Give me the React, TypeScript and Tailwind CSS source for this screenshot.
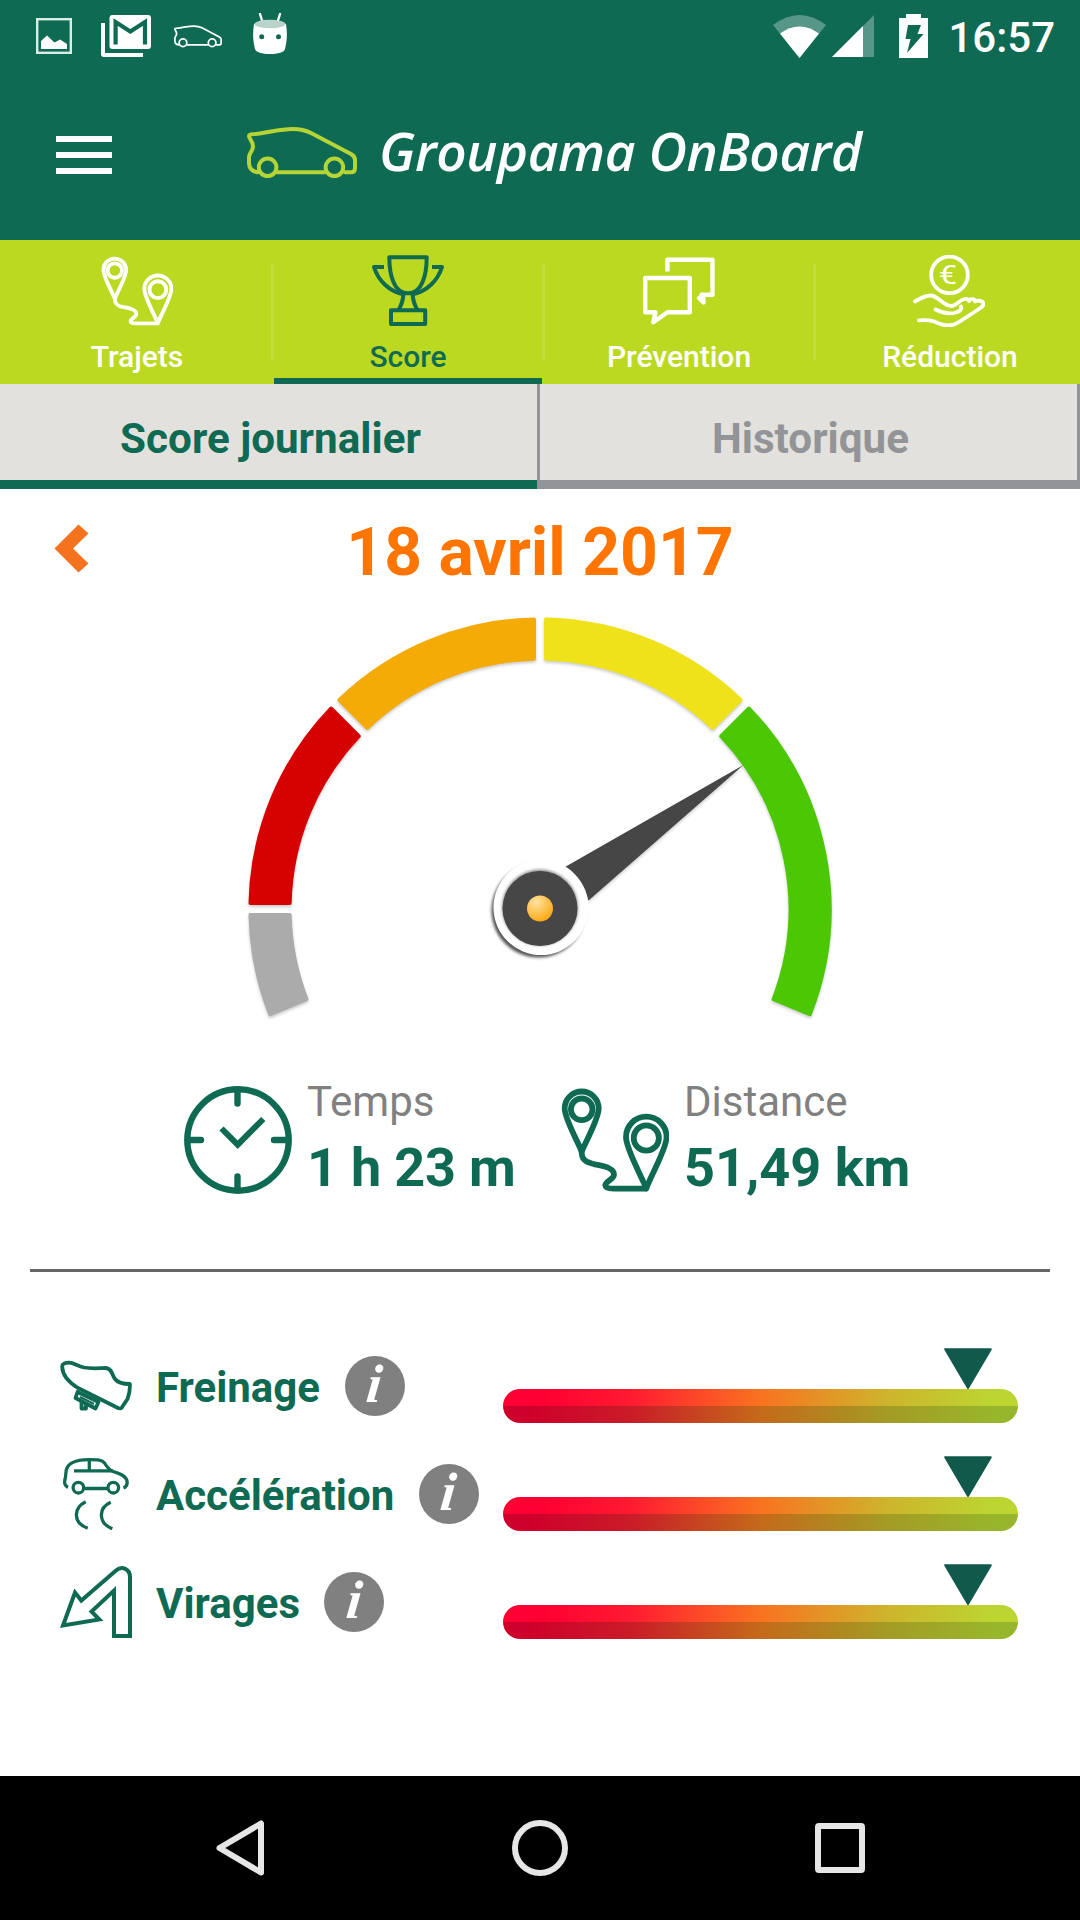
import React from 'react';

const GREEN = '#0f6a53';

// ring geometry, in the gauge's own coordinates
const CX = 300;
const CY = 300;
const R_OUT = 289.6;
const R_IN = 250.4;
const GAP = 6;

const segments = [
  { from: 157.5, to: 180, color: '#ababab' },
  { from: 180, to: 225, color: '#d60202' },
  { from: 225, to: 270, color: '#f5ab05' },
  { from: 270, to: 315, color: '#efe21a' },
  { from: 315, to: 382.5, color: '#4cc704' },
];

const tabs = [
  { name: 'Trajets', icon: <RouteIcon className="h-[72px] w-[72px]" /> },
  { name: 'Score', icon: <TrophyIcon />, active: true },
  { name: 'Prévention', icon: <BubblesIcon /> },
  { name: 'Réduction', icon: <HandIcon /> },
];

const scores = [
  { name: 'Freinage', icon: <BrakeIcon />, value: 90.3 },
  { name: 'Accélération', icon: <SkidIcon />, value: 90.3 },
  { name: 'Virages', icon: <TurnIcon />, value: 90.3 },
];

function point(r: number, deg: number, shift: number) {
  const a = (deg * Math.PI) / 180 + Math.asin(shift / r);
  return `${(CX + r * Math.cos(a)).toFixed(2)} ${(CY + r * Math.sin(a)).toFixed(2)}`;
}

function segmentPath(from: number, to: number) {
  return `M${point(R_OUT, from, GAP)}A${R_OUT} ${R_OUT} 0 0 1 ${point(R_OUT, to, -GAP)}L${point(R_IN, to, -GAP)}A${R_IN} ${R_IN} 0 0 0 ${point(R_IN, from, GAP)}Z`;
}

function CarIcon({ className }: { className: string }) {
  return (
    <svg className={className} viewBox="0 0 110 52" fill="none" stroke="currentColor" strokeWidth="4" strokeLinecap="round" strokeLinejoin="round">
      <path d="M11 45.3C5 44.5 2 41 2 36V30C2 26 6 24 6 19.5C6 14 2 12 2 9C2 7.5 4 7 8 7C20 6 32 2 46 2C54 2 58 3 64 6L104 27C107.5 29 108 30.5 108 33V41C108 44 106.5 45.3 104 45.3H98M30 45.3H78" />
      <circle cx="20.6" cy="40.3" r="8.8" />
      <circle cx="87.4" cy="40.3" r="8.8" />
    </svg>
  );
}

function RouteIcon({ className }: { className: string }) {
  return (
    <svg className={className} viewBox="0 0 108 108" fill="none" stroke="currentColor" strokeWidth="5.8" strokeLinejoin="round">
      <path d="M20.7 65.5C18 58 3.7 33 3.7 22.5A17 17 0 0 1 37.7 22.5C37.7 33 23.5 58 20.7 65.5Z" />
      <circle cx="20.7" cy="23.3" r="10.8" />
      <path d="M85.3 102.5C80 89 65 63 65 51A20.3 20.3 0 0 1 105.6 51C105.6 63 90 89 85.3 102.5Z" />
      <circle cx="85.3" cy="52" r="12.6" />
      <path d="M20.7 64C20 73 24 76.5 34 78.3C44 79.8 53 83 53 88.5C53 93.5 44.3 95 44.3 99.3C44.3 102 48 102.6 53 102.6H86" />
    </svg>
  );
}

function TrophyIcon() {
  return (
    <svg className="h-[72px] w-[72px]" viewBox="0 0 72 72" fill="none" stroke="currentColor" strokeWidth="4" strokeLinejoin="round">
      <path d="M17.3 2.2H54.7C54.7 20 50 38.3 36 38.3S17.3 20 17.3 2.2Z" />
      <path d="M12 12H2C6 25 17 37 33 39.5M60 12H70C66 25 55 37 39 39.5" />
      <path d="M31.5 39C31 45 29 51 26.5 55M40.5 39C41 45 43 51 45.5 55" />
      <rect x="19" y="55.3" width="34.2" height="13.7" />
    </svg>
  );
}

function BubblesIcon() {
  return (
    <svg className="h-[72px] w-[72px]" viewBox="0 0 72 72" fill="none" stroke="currentColor" strokeWidth="4.4" strokeLinejoin="round">
      <path d="M2.2 23H46.8V57.3H24.5L10.3 67.3L12.5 57.3H2.2Z" />
      <path d="M24.4 16.5V4.7H69.5V39.7H58.5V42L56 43L60.5 47.5L60 40" />
    </svg>
  );
}

function HandIcon() {
  return (
    <svg className="-ml-[2px] h-[72px] w-[72px]" viewBox="0 0 72 72" fill="none" stroke="currentColor" strokeWidth="3.8" strokeLinecap="round" strokeLinejoin="round">
      <circle cx="36.5" cy="19.9" r="18.3" />
      <text x="28" y="29" textAnchor="middle" transform="scale(1.25 1)" fontSize="26" fontWeight="400" fontFamily="Roboto, sans-serif" fill="currentColor" stroke="none">€</text>
      <path d="M2 46.5C7 43.5 12 40.5 17.5 40.5C25 40.5 30 51 38.5 51C43 51 46 45 52 44C54 43.5 56 44.5 56 46C57 43.5 62 43.5 62 46.5C65 44.5 70.5 46 70.5 49C70.5 51 69 52 67.5 53L46 67C40 71 33 71.5 26 68.5C18 65 15 65 6 65.3" />
      <path d="M22.5 54.5C29 58 35 59 41 58C46 57 49 55 48 51.5" />
    </svg>
  );
}

function ClockIcon() {
  return (
    <svg className="h-[108px] w-[108px]" viewBox="0 0 108 108" fill="none" stroke={GREEN} strokeWidth="6.4">
      <circle cx="54" cy="54" r="50.7" />
      <path strokeLinecap="round" d="M53.5 4V17.5M53.5 90.5V104M4 54H17M90 54H104" />
      <path strokeWidth="6" d="M37.5 42.5L53.7 58.7L79.3 33" />
    </svg>
  );
}

function BrakeIcon() {
  return (
    <svg className="h-[72px] w-[72px]" viewBox="0 0 72 72" fill="none" stroke={GREEN} strokeWidth="3.8" strokeLinejoin="round">
      <path d="M2.2 16.5C2 14 5 12.6 9 12.6C14 12.6 17 16 24 17.5C32 19 40 18 46 18C52 18.5 52 25 55 29C58 33 64 34 69.8 34C70.3 40 69 45 67.5 49L61.5 58C60 59.5 57 57.5 54 56L18 38C10 33 2.2 25 2.2 16.5Z" />
      <path d="M17.5 42L38.5 52L35.5 58.5L15.5 48Z" />
      <path strokeWidth="2" d="M20 47L34 54" />
      <path d="M21.5 51V58.5H26V54" />
    </svg>
  );
}

function SkidIcon() {
  return (
    <svg className="h-[72px] w-[72px]" viewBox="0 0 72 72" fill="none" stroke={GREEN} strokeWidth="3.3">
      <path d="M8 29.5C5 28 4.3 25 4.8 22C6 19 5.5 16 6.3 12C8 5 17 1.7 29 1.7C38 1.7 42 1.7 44.5 5C47 9 49 12 53 13.5C60 15.5 67.2 18 67.2 24.5C67.2 28 66 29 63.5 30" />
      <path d="M14 12.8H53M29.3 1.5V12.8M25 30.5H47" />
      <circle cx="18.4" cy="29.7" r="5.3" />
      <circle cx="53.3" cy="29.7" r="5.3" />
      <path d="M25.7 43.7C13 50 13 65 27.7 70.2M50.7 44.3C38 50 38 65 52.3 70.8" />
    </svg>
  );
}

function TurnIcon() {
  return (
    <svg className="h-[72px] w-[72px]" viewBox="0 0 72 72" fill="none" stroke={GREEN} strokeWidth="4">
      <path d="M3 59.5L15 26.5L21.3 34.5L56 4.5C62 -0.5 70 3 70 11V70H54V24.5L31.5 45.5L39.3 53.5Z" />
    </svg>
  );
}

function StatusBar() {
  return (
    <div className="flex h-[72px] items-center justify-between pl-9 pr-[25px] text-white">
      <div className="flex items-center">
        <svg className="h-9 w-9" viewBox="0 0 36 36">
          <rect x="1.2" y="1.2" width="33.6" height="33.6" fill="none" stroke="#d8eee6" strokeWidth="2.4" />
          <path d="M5 31V23L11 17.5L18.5 24.5L24 21.5L31 26V31Z" fill="#fff" />
        </svg>
        <svg className="ml-[29px] h-[42px] w-[50px]" viewBox="0 0 50 42">
          <path d="M0 8H4V38H42V42H3Q0 42 0 39Z" fill="#fff" />
          <rect x="8.5" y="0" width="41.5" height="34" rx="3" fill="#fff" />
          <path d="M14.6 29.5V7L29.3 16.5L44 7V29.5" fill="none" stroke={GREEN} strokeWidth="4.2" />
        </svg>
        <CarIcon className="ml-[23px] h-[23px] w-12" />
        <svg className="ml-[31px] h-[41px] w-[34px] -translate-y-[3px]" viewBox="0 0 34 41">
          <path d="M7 1L9.5 9M27 1L24.5 9" stroke="#fff" strokeWidth="2.4" strokeLinecap="round" />
          <path d="M1 11H33C34.5 20 34 28 32 36C31 39.5 25 41 17 41S3 39.5 2 36C0 28 -0.5 20 1 11Z" fill="#fff" />
          <ellipse cx="17" cy="11" rx="15.5" ry="4.3" fill="#b9d3ca" />
          <circle cx="8.7" cy="23.7" r="2.5" fill={GREEN} />
          <circle cx="25.5" cy="23.7" r="2.5" fill={GREEN} />
        </svg>
      </div>
      <div className="flex items-center">
        <svg className="h-[43px] w-[53px]" viewBox="0 0 53 43">
          <path d="M0 10Q26.5 -10 53 10L26.5 43Z" fill="#fff" opacity=".3" />
          <path d="M7 18.5Q26.5 4.5 46 18.5L26.5 43Z" fill="#fff" />
        </svg>
        <svg className="ml-[6px] h-[42px] w-[42px]" viewBox="0 0 42 42">
          <path d="M42 0V42H0Z" fill="#fff" opacity=".3" />
          <path d="M31 11V42H0Z" fill="#fff" />
        </svg>
        <svg className="ml-[25px] h-11 w-[29px]" viewBox="0 0 29 44">
          <path d="M7 0H22V4H29V44H0V4H7Z" fill="#fff" />
          <path d="M9 11H22L18.5 20H24.5L8 39L11.5 25H6.5Z" fill={GREEN} />
        </svg>
        <span className="ml-5 pt-[3px] text-[42px] font-medium leading-none">16:57</span>
      </div>
    </div>
  );
}

function Header() {
  return (
    <header className="flex h-[168px] items-center pb-[6px] pl-14 text-white">
      <div className="flex flex-col gap-2.5 pt-1">
        <div className="h-1.5 w-14 bg-white" />
        <div className="h-1.5 w-14 bg-white" />
        <div className="h-1.5 w-14 bg-white" />
      </div>
      <CarIcon className="ml-[135px] h-[52px] w-[110px] text-[#b4d535]" />
      <h1 className="ml-[22px] whitespace-nowrap pb-[5px] font-['Open_Sans',sans-serif] text-[53px] font-semibold italic leading-none tracking-[-0.4px]">
        Groupama OnBoard
      </h1>
    </header>
  );
}

function Gauge() {
  return (
    <svg className="mx-auto block h-[420px] w-[600px] overflow-visible" viewBox="0 0 600 420">
      <defs>
        <radialGradient id="ball" cx="35%" cy="25%" r="80%">
          <stop offset="0" stopColor="#ffe3a0" />
          <stop offset="1" stopColor="#f9a710" />
        </radialGradient>
        <filter id="soft" x="-10%" y="-10%" width="120%" height="120%" colorInterpolationFilters="sRGB">
          <feDropShadow dx="0" dy="2" stdDeviation="1.5" floodColor="#000" floodOpacity=".2" />
        </filter>
        <filter id="blur" x="-20%" y="-20%" width="140%" height="140%">
          <feGaussianBlur stdDeviation="1.5" />
        </filter>
      </defs>
      <g filter="url(#soft)">
        {segments.map((s) => (
          <path key={s.color} d={segmentPath(s.from, s.to)} fill={s.color} stroke={s.color} strokeWidth="4" strokeLinejoin="round" />
        ))}
      </g>
      <path d="M503.5 156L325 258Q342 270 348.5 291.5Z" fill="#464646" filter="url(#soft)" />
      <circle cx="298.5" cy="301.5" r="47" fill="#555" filter="url(#blur)" />
      <circle cx="301" cy="298.5" r="47.5" fill="#fff" />
      <circle cx="300" cy="298.5" r="38" fill="#888" filter="url(#blur)" />
      <circle cx="300" cy="299.5" r="37.5" fill="#464646" />
      <circle cx="300" cy="299.5" r="13" fill="url(#ball)" />
    </svg>
  );
}

function ScoreRow({ name, icon, value }: { name: string; icon: React.ReactNode; value: number }) {
  return (
    <div className="flex h-[108px] items-center">
      {icon}
      <span className="ml-6 pt-1 text-[42px] font-bold leading-none">{name}</span>
      <span className="ml-[24.5px] flex h-[60px] w-[60px] items-center justify-center rounded-full bg-[#808080] pb-1 font-['Liberation_Serif',serif] text-[54px] font-bold italic leading-none text-white">
        <span className="-skew-x-6">i</span>
      </span>
      <div className="relative ml-auto mt-[40px] h-[34px] w-[515px]">
        <div className="h-full overflow-hidden rounded-full">
          <div className="h-[17px] bg-[linear-gradient(to_right,#ff0033_8%,#ff1b30_25%,#f97320_50%,#cdb52c_75%,#bcd530_95%)]" />
          <div className="h-[17px] bg-[linear-gradient(to_right,#ce002b_5%,#c91c28_25%,#c46a1a_50%,#a39c25_75%,#98b62b_95%)]" />
        </div>
        <svg className="absolute -top-[41px] h-[41px] w-12 -translate-x-1/2" style={{ left: `${value}%` }} viewBox="0 0 48 41">
          <path d="M1.2 1.2H46.8L24 40Z" fill="#10594b" stroke="#10594b" strokeWidth="2" strokeLinejoin="round" />
        </svg>
      </div>
    </div>
  );
}

function NavBar() {
  return (
    <nav className="flex h-36 items-center justify-between bg-black pl-[216px] pr-[215px]">
      <svg className="h-14 w-12" viewBox="0 0 48 56" fill="none" stroke="#e6e6e6" strokeWidth="6" strokeLinejoin="round">
        <path d="M45 3.5V52.5L3.5 28Z" />
      </svg>
      <div className="h-14 w-14 rounded-full border-[6px] border-[#e6e6e6]" />
      <div className="h-[50px] w-[50px] rounded border-[6px] border-[#e6e6e6]" />
    </nav>
  );
}

const App = () => {
  return (
    <div className="flex h-[1920px] w-[1080px] flex-col overflow-hidden bg-white font-[Roboto,sans-serif] text-[#0f6a53]">
      <div className="bg-[#0f6a53]">
        <StatusBar />
        <Header />
      </div>

      {/* Main tabs */}
      <div className="flex h-36 overflow-hidden bg-[#bcd922]">
        {tabs.map((tab, i) => (
          <div key={tab.name} className="flex h-full w-[271px] shrink-0">
            <div className={`mt-6 h-24 w-[3px] ${i > 0 ? 'bg-[#c3dd3c]' : ''}`} />
            <div className={`flex flex-1 flex-col items-center border-b-[6px] pt-[15px] ${tab.active ? 'border-[#0f6a53]' : 'border-transparent text-white'}`}>
              {tab.icon}
              <span className="mt-[14px] text-[30px] font-medium leading-8">{tab.name}</span>
            </div>
          </div>
        ))}
      </div>

      {/* Sub tabs */}
      <div className="flex h-[105px] bg-[#e2e1dd] text-[42.2px] font-bold">
        <div className="flex w-[537px] items-center justify-center border-b-[9px] border-[#0f6a53] pl-1 pt-3.5">Score journalier</div>
        <div className="w-[3px] bg-[#929497]" />
        <div className="flex w-[540px] items-center justify-center border-b-[9px] border-r-[3px] border-[#929497] pl-1 pt-3.5 text-[#929497]">Historique</div>
      </div>

      {/* Day */}
      <div className="relative flex h-[120px] items-center justify-center">
        <svg className="absolute left-[53.5px] top-[35px] h-[49px] w-9" viewBox="0 0 36 49">
          <path d="M24.5 0.5L0.5 24.5L24.5 48.5L34.5 39.5L19 24.5L34.5 9.5Z" fill="#f5731f" />
        </svg>
        <span className="pt-[7px] text-[66px] font-bold leading-none text-[#ff7500]">18 avril 2017</span>
      </div>

      <Gauge />

      {/* Trip totals */}
      <div className="mt-[57px] flex h-[108px] pl-[184px]">
        <ClockIcon />
        <div className="ml-[15px] w-[254px]">
          <div className="text-[42px] leading-8 text-[#808080]">Temps</div>
          <div className="mt-[25px] text-[54px] font-bold leading-[50px] tracking-[-0.2px]">1 h 23 m</div>
        </div>
        <RouteIcon className="h-[108px] w-[108px]" />
        <div className="ml-[15px]">
          <div className="text-[42px] leading-8 text-[#808080]">Distance</div>
          <div className="mt-[25px] text-[54px] font-bold leading-[50px]">51,49 km</div>
        </div>
      </div>

      <div className="mx-[30px] mt-[75px] h-[3px] bg-[#666]" />

      <div className="mt-[60px] pl-[60px] pr-[62px]">
        {scores.map((score) => (
          <ScoreRow key={score.name} {...score} />
        ))}
      </div>

      <div className="mt-auto">
        <NavBar />
      </div>
    </div>
  );
};

export default App;
